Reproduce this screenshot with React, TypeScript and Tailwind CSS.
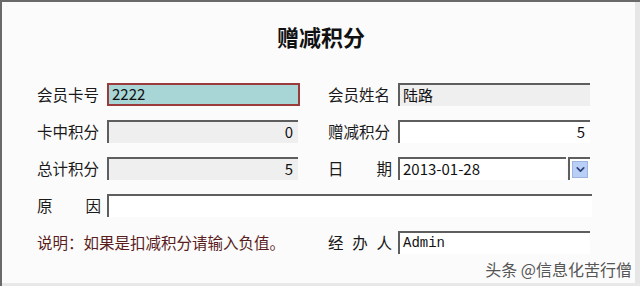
import { ChevronDown } from "lucide-react";

const font = { fontFamily: '"Noto Sans CJK SC", "Noto Sans", sans-serif' };

const Field = ({
  value = "",
  align = "left",
  bg = "bg-[#efefef]",
  width = "w-[193px]",
  mono = false,
}: {
  value?: string;
  align?: "left" | "right";
  bg?: string;
  width?: string;
  mono?: boolean;
}) => (
  <div
    className={`${width} shrink-0 h-[23px] ${bg} border-t-2 border-l-2 border-[#5e5e5e] flex items-center px-[3px] text-[15px] text-[#111] whitespace-nowrap ${
      align === "right" ? "justify-end pr-[5px]" : ""
    }`}
    style={mono ? { fontFamily: '"Liberation Mono", monospace', fontSize: 14 } : undefined}
  >
    {value}
  </div>
);

const Label = ({ children, spread = false }: { children: string; spread?: boolean }) => (
  <div
    className={`w-[70px] shrink-0 pr-[6px] text-[15.5px] text-[#1a1a1a] leading-none whitespace-nowrap flex ${
      spread ? "justify-between" : ""
    }`}
  >
    {spread ? children.split("").map((c, i) => <span key={i}>{c}</span>) : children}
  </div>
);

export default function App() {
  return (
    <div
      className="relative w-[640px] h-[286px] bg-[#fbfbfb] overflow-hidden border-t-2 border-l-2 border-[#6a6a6a]"
      style={font}
    >
      <div className="absolute right-0 top-0 h-full w-[5px] bg-[#e6e6e6]" />
      <div className="absolute left-0 bottom-0 w-full h-[3px] bg-[#e8e8e8]" />

      <div className="pt-[19px] h-[81px] text-center text-[22px] font-bold text-[#111] leading-[30px]">赠减积分</div>

      <div className="pl-[35px] flex flex-col gap-[14px]">
        <div className="flex items-center">
          <Label>会员卡号</Label>
          <div className="w-[193px] shrink-0 h-[23px] bg-[#a8d5d6] border-2 border-[#9b3b3b] flex items-center px-[3px] text-[15px] text-[#111]">
            2222
          </div>
          <div className="w-[28px] shrink-0" />
          <Label>会员姓名</Label>
          <Field value="陆路" width="w-[192px]" />
        </div>

        <div className="flex items-center">
          <Label>卡中积分</Label>
          <Field value="0" align="right" width="w-[191px]" />
          <div className="w-[30px] shrink-0" />
          <Label>赠减积分</Label>
          <Field value="5" align="right" bg="bg-white" width="w-[192px]" />
        </div>

        <div className="flex items-center">
          <Label>总计积分</Label>
          <Field value="5" align="right" width="w-[191px]" />
          <div className="w-[30px] shrink-0" />
          <Label spread>日期</Label>
          <Field value="2013-01-28" bg="bg-white" width="w-[168px]" />
          <div className="ml-[2px] shrink-0 w-[22px] h-[23px] border-t-2 border-l-2 border-[#5e5e5e] bg-white p-[2px]">
            <div className="w-full h-full bg-[#b9cff5] border border-[#9bb4e0] flex items-center justify-center">
              <ChevronDown size={13} strokeWidth={3} className="text-[#2a3f7a]" />
            </div>
          </div>
        </div>

        <div className="flex items-center">
          <Label spread>原因</Label>
          <Field bg="bg-white" width="w-[485px]" />
        </div>

        <div className="flex items-center">
          <div className="w-[291px] shrink-0 text-[15.5px] text-[#5a1c1c] leading-none whitespace-nowrap">
            说明：如果是扣减积分请输入负值。
          </div>
          <div className="w-[70px] shrink-0 pr-[6px] text-[15.5px] text-[#1a1a1a] leading-none flex justify-between">
            <span>经</span>
            <span>办</span>
            <span>人</span>
          </div>
          <Field value="Admin" bg="bg-white" width="w-[192px]" mono />
        </div>
      </div>

      <div
        className="absolute right-[8px] bottom-[9px] text-[16px] text-[#555] leading-none"
        style={{ textShadow: "0 0 2px #fff" }}
      >
        头条 @信息化苦行僧
      </div>
    </div>
  );
}
